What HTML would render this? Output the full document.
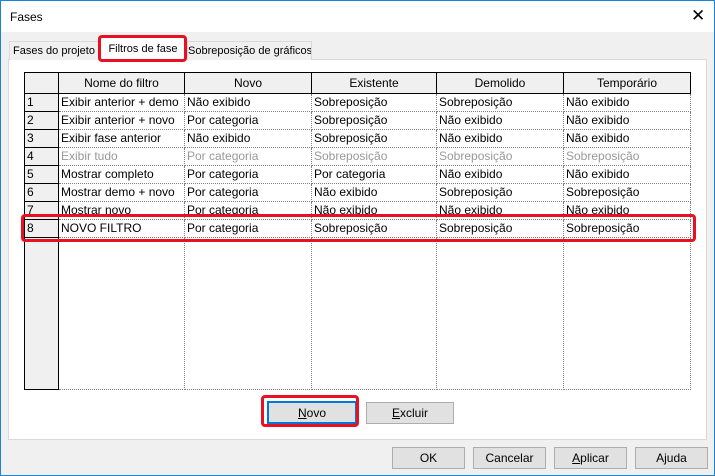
<!DOCTYPE html><html><head><style>
body{margin:0;width:715px;height:476px;overflow:hidden;font-family:"Liberation Sans",sans-serif;font-size:12px;}
.win{position:absolute;left:0;top:0;width:713px;height:474px;border:1px solid #1883d7;background:#f0f0f0;}
.title{position:absolute;left:0;top:0;width:713px;height:31px;background:#fff;}
.title span{position:absolute;left:9px;top:9px;}
.x{position:absolute;left:690px;top:5px;font-size:17px;}
.panel{position:absolute;left:7px;top:58px;width:697px;height:379px;background:#fff;border:1px solid #d9d9d9;}
.tab{position:absolute;top:40px;height:18px;border:1px solid #d9d9d9;border-bottom:none;background:#f0f0f0;line-height:18px;font-size:11px;text-align:center;overflow:hidden;white-space:nowrap;}
.red{position:absolute;border:3px solid #e81123;border-radius:4px;}
table{position:absolute;left:23px;top:71px;border-collapse:collapse;table-layout:fixed;}
td,th{height:17px;padding:0 2px;white-space:nowrap;overflow:hidden;border-right:1px dotted #808080;border-bottom:1px dotted #808080;font-weight:normal;text-align:left;line-height:17px;}
th{height:20px;background:#f0f0f0;border:1px solid #000;text-align:center;}
td.n{background:#f0f0f0;border:1px solid #000;}
tr.g td{color:#999;}
.btn{position:absolute;height:20px;border:1px solid #adadad;background:#e1e1e1;text-align:center;line-height:20px;}
</style></head><body><div class="win">
<div class="title"><span>Fases</span><div class="x">✕</div></div>
<div class="panel"></div>
<div class="tab" style="left:8px;width:88px">Fases do projeto</div>
<div class="tab" style="left:186px;width:123px">Sobreposição de gráficos</div>
<div class="tab" style="left:99px;top:37px;height:21px;width:84px;background:#fff;border-color:#fff;line-height:20px;">Filtros de fase</div>
<div class="red" style="left:97px;top:34px;width:83px;height:21px"></div>
<table>
<colgroup><col style="width:34px"><col style="width:126px"><col style="width:127px"><col style="width:125px"><col style="width:127px"><col style="width:127px"></colgroup>
<tr><th></th><th>Nome do filtro</th><th>Novo</th><th>Existente</th><th>Demolido</th><th>Temporário</th></tr>
<tr><td class="n">1</td><td>Exibir anterior + demo</td><td>Não exibido</td><td>Sobreposição</td><td>Sobreposição</td><td>Não exibido</td></tr>
<tr><td class="n">2</td><td>Exibir anterior + novo</td><td>Por categoria</td><td>Sobreposição</td><td>Não exibido</td><td>Não exibido</td></tr>
<tr><td class="n">3</td><td>Exibir fase anterior</td><td>Não exibido</td><td>Sobreposição</td><td>Não exibido</td><td>Não exibido</td></tr>
<tr class="g"><td class="n" style="color:#000">4</td><td>Exibir tudo</td><td>Por categoria</td><td>Sobreposição</td><td>Sobreposição</td><td>Sobreposição</td></tr>
<tr><td class="n">5</td><td>Mostrar completo</td><td>Por categoria</td><td>Por categoria</td><td>Não exibido</td><td>Não exibido</td></tr>
<tr><td class="n">6</td><td>Mostrar demo + novo</td><td>Por categoria</td><td>Não exibido</td><td>Sobreposição</td><td>Sobreposição</td></tr>
<tr><td class="n">7</td><td>Mostrar novo</td><td>Por categoria</td><td>Não exibido</td><td>Não exibido</td><td>Não exibido</td></tr>
<tr><td class="n">8</td><td>NOVO FILTRO</td><td>Por categoria</td><td>Sobreposição</td><td>Sobreposição</td><td>Sobreposição</td></tr>
<tr><td class="n" style="height:151px"></td><td></td><td></td><td></td><td></td><td></td></tr>
</table>
<div class="red" style="left:20px;top:213px;width:669px;height:22px"></div>
<div class="btn" style="left:266px;top:400px;width:86px;border:2px solid #0078d7;height:19px"><u>N</u>ovo</div>
<div class="red" style="left:260px;top:394px;width:92px;height:26px"></div>
<div class="btn" style="left:365px;top:401px;width:86px"><u>E</u>xcluir</div>
<div class="btn" style="left:391px;top:446px;width:71px">OK</div>
<div class="btn" style="left:472px;top:446px;width:71px">Cancelar</div>
<div class="btn" style="left:553px;top:446px;width:71px"><u>A</u>plicar</div>
<div class="btn" style="left:634px;top:446px;width:71px">Ajuda</div>
</div></body></html>
